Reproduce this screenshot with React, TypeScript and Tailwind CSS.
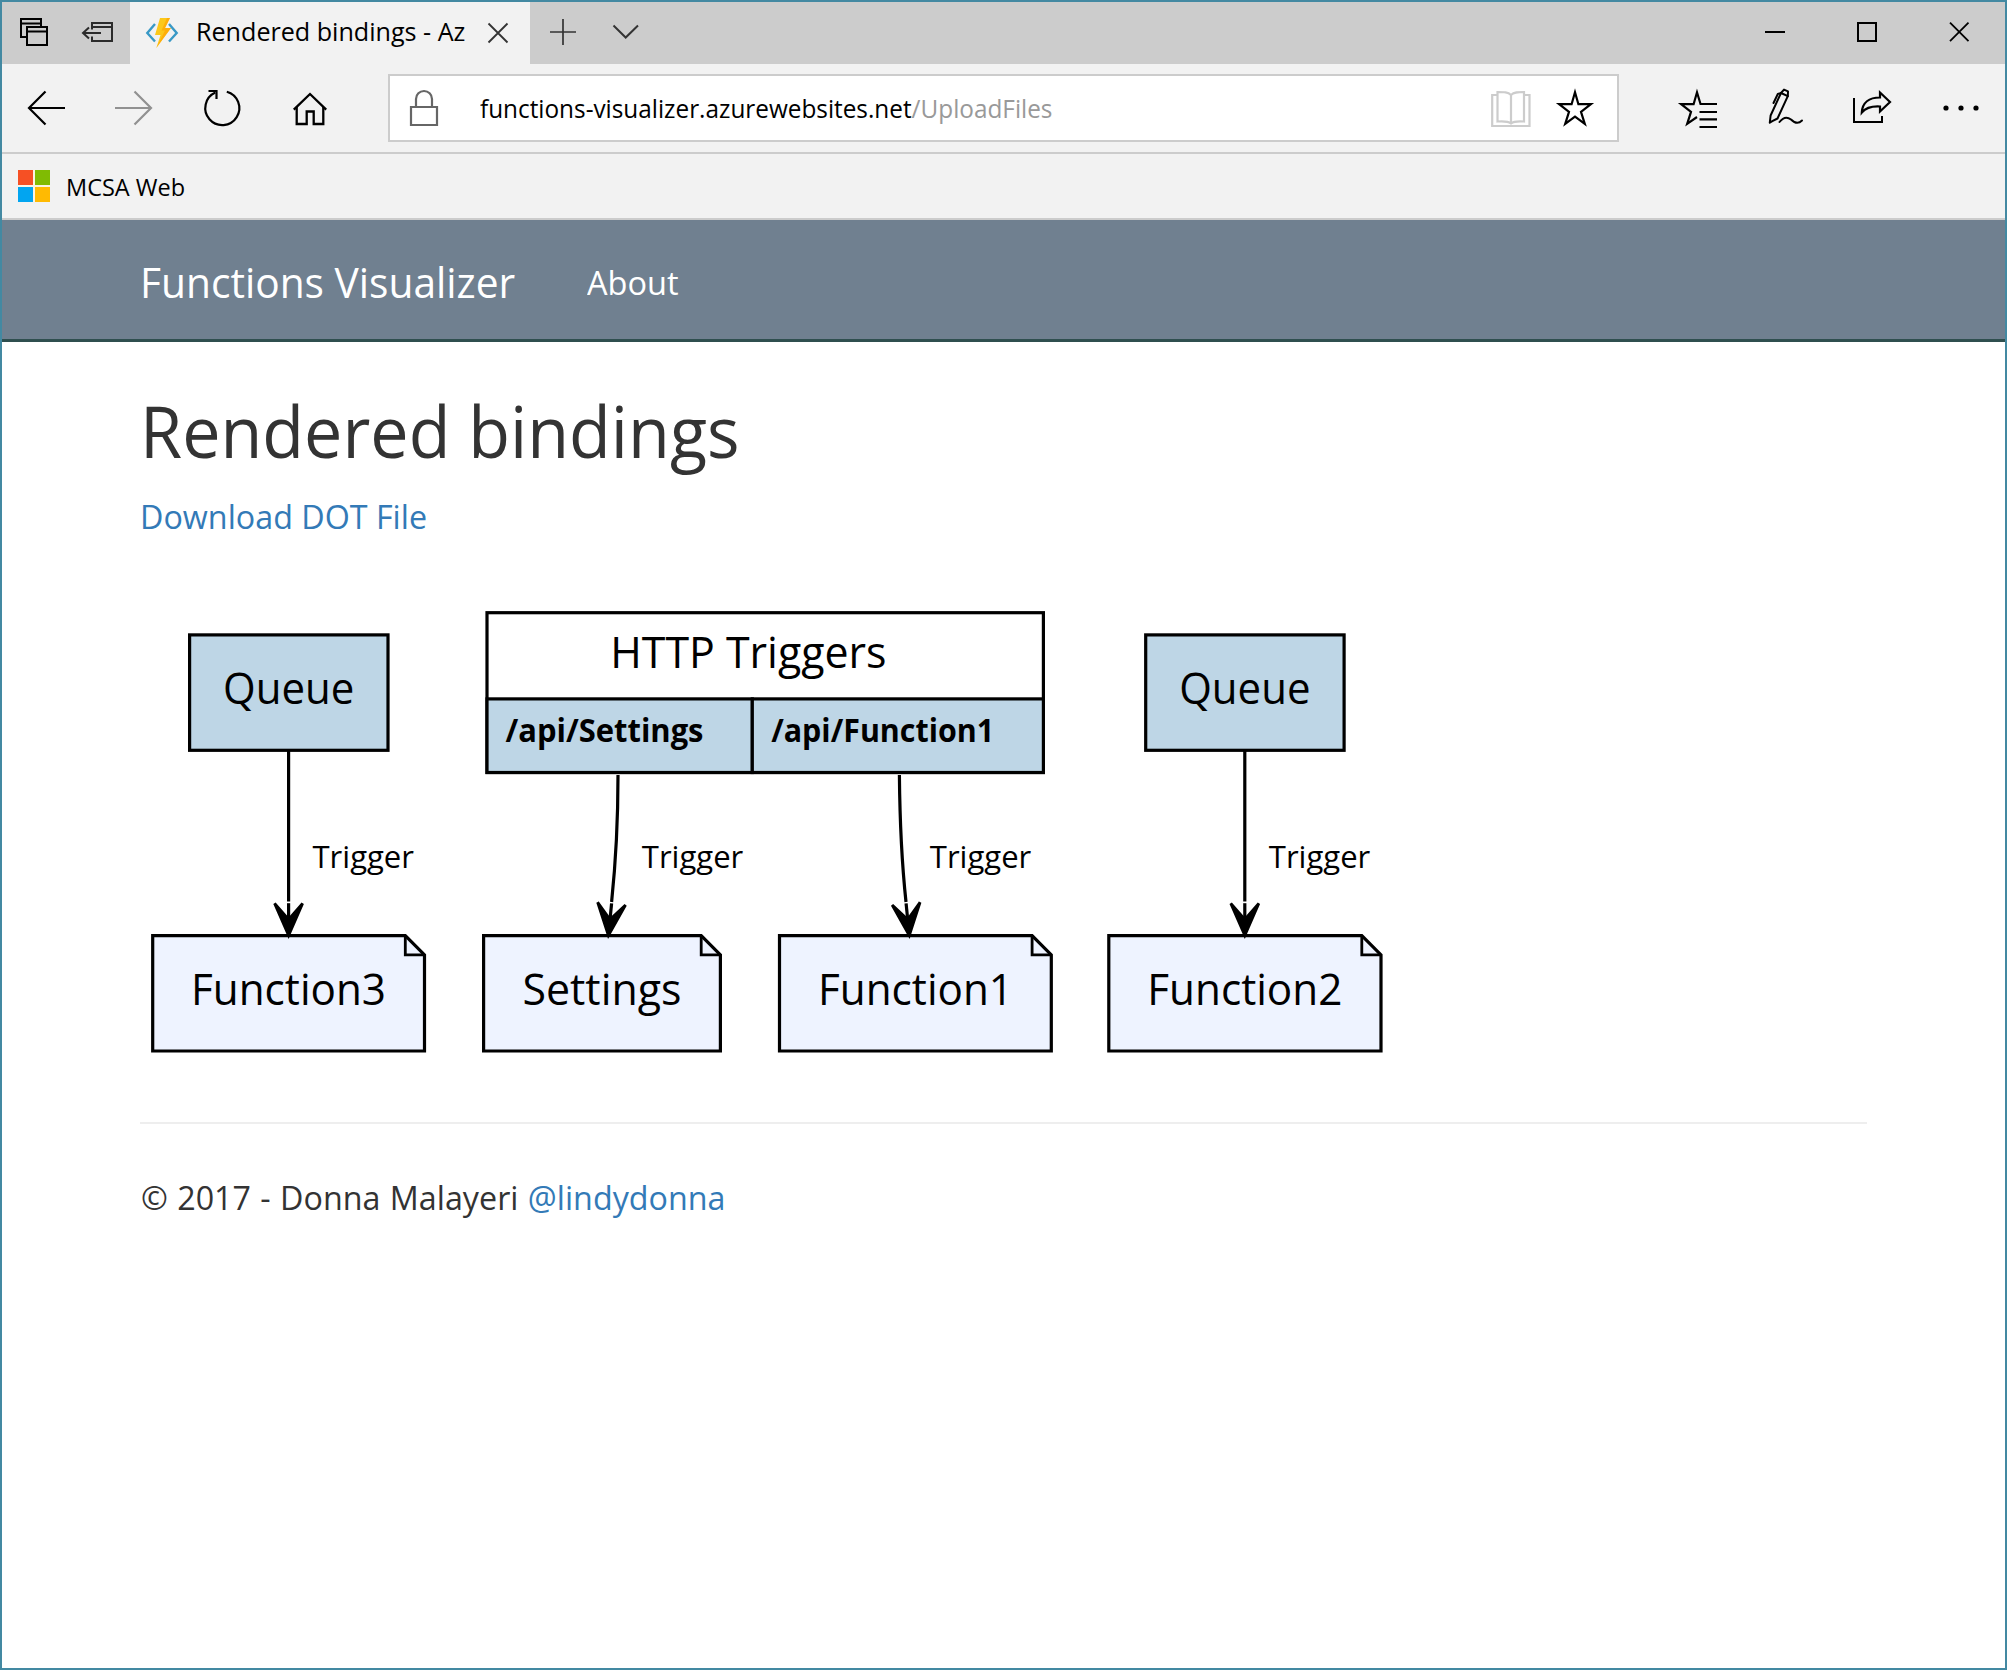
import type { ReactNode } from 'react';

function Glyph({ x, y, w, h, className = '', children }: {
  x: number; y: number; w: number; h: number; className?: string; children: ReactNode;
}) {
  return (
    <svg
      width={w}
      height={h}
      viewBox={`${x} ${y} ${w} ${h}`}
      fill="none"
      stroke="#000"
      strokeWidth={2}
      className={`block shrink-0 ${className}`}
    >
      {children}
    </svg>
  );
}

function TabStrip() {
  return (
    <div className="flex h-[62px] bg-[#cccccc]">
      <Glyph x={2} y={2} w={64} h={62}>
        <path d="M27 37H21V19H41V26M21 23.5H41" />
        <path d="M27 27H47V45H27ZM27 31.5H47" />
      </Glyph>
      <Glyph x={66} y={2} w={64} h={62}>
        <g stroke="#2b2b2b">
          <path d="M92 29.5V23H112V41H92V36.5M92 27H112" />
          <path d="M101 33H83M89 27.5L83 33L89 38.5" />
        </g>
      </Glyph>
      <div className="flex w-[400px] items-center bg-[#f2f2f2]">
        <Glyph x={144} y={16} w={36} h={32} className="ml-3.5">
          <path d="M155 23L147.3 32L155 40.5M169 23L176.7 32L169 40.5" stroke="#3999c6" strokeWidth={2.4} />
          <path d="M160 17H170L165 27H171L156.3 47L160.5 34H155Z" fill="#fcc81a" stroke="none" />
          <path d="M167 17H170L165 27H171L156.3 47L165 29.5H161.5Z" fill="#ff9f00" fillOpacity={0.65} stroke="none" />
        </Glyph>
        <span className="mb-1 ml-4 w-[284px] text-[25.5px] whitespace-nowrap">
          <span className="inline-block origin-left scale-x-[0.985]">Rendered bindings - Az</span>
        </span>
        <Glyph x={486} y={20} w={24} h={24} className="ml-1.5">
          <path d="M488.5 22.5L507.5 41.5M507.5 22.5L488.5 41.5" stroke="#333" strokeWidth={1.8} />
        </Glyph>
      </div>
      <Glyph x={530} y={2} w={64} h={62}>
        <path d="M550 32H576M563 19V45" stroke="#333" strokeWidth={1.7} />
      </Glyph>
      <Glyph x={594} y={2} w={64} h={62}>
        <path d="M613.5 25.5L625.7 37.5L638 25.5" stroke="#333" />
      </Glyph>
      <div className="ml-auto flex">
        <Glyph x={1729} y={2} w={92} h={62}>
          <path d="M1765 32H1785" />
        </Glyph>
        <Glyph x={1821} y={2} w={92} h={62}>
          <path d="M1858 23H1876V41H1858Z" />
        </Glyph>
        <Glyph x={1913} y={2} w={92} h={62}>
          <path d="M1950 22.7L1968.5 41.2M1968.5 22.7L1950 41.2" strokeWidth={1.8} />
        </Glyph>
      </div>
    </div>
  );
}

function Toolbar() {
  return (
    <div className="flex h-[90px] items-center border-b-2 border-[#cccccc] bg-[#f2f2f2]">
      <Glyph x={2} y={64} w={88} h={88}>
        <path d="M65 108H28.5M45.5 91.5L29 108L45.5 124.5" strokeWidth={2.2} />
      </Glyph>
      <Glyph x={90} y={64} w={88} h={88}>
        <path d="M115 108H151.5M134.5 91.5L151 108L134.5 124.5" stroke="#919191" strokeWidth={2.2} />
      </Glyph>
      <Glyph x={178} y={64} w={88} h={88}>
        <path d="M226.8 91.7A17 17 0 1 1 215.3 92.6" strokeWidth={2.2} />
        <path d="M208.5 91H216.5V99" strokeWidth={2.2} />
      </Glyph>
      <Glyph x={266} y={64} w={88} h={88}>
        <path d="M293.8 109.7L310 94L326.2 109.7" strokeWidth={2.3} />
        <path d="M296.7 107V124H306.7V111.5H313.7V124H323.3V107" strokeWidth={2.3} />
      </Glyph>
      <div className="ml-[34px] flex h-[68px] w-[1231px] items-center border-2 border-[#cccccc] bg-white">
        <Glyph x={408} y={88} w={32} h={40} className="ml-[18px]">
          <g stroke="#666">
            <path d="M411 107H437V125H411Z" strokeWidth={2.2} />
            <path d="M416 106V99A8 8 0 0 1 432 99V106" strokeWidth={2.2} />
          </g>
        </Glyph>
        <span className="ml-10 text-[25.5px] whitespace-nowrap">
          <span className="inline-block origin-left scale-x-[0.954]">
            functions-visualizer.azurewebsites.net<span className="text-[#999999]">/UploadFiles</span>
          </span>
        </span>
        <div className="mr-[18px] ml-auto flex">
          <Glyph x={1488} y={86} w={64} h={44}>
            <g stroke="#cccccc" strokeWidth={2.2}>
              <path d="M1497 95H1492.2V126H1529.5V95H1525" />
              <path d="M1511 95C1508 92 1504 92 1497.5 92V121.5C1504 121 1508 121 1511 123.5C1514 121 1518 121 1524 121.5V92C1518 92 1514 92 1511 95V123.5" />
            </g>
          </Glyph>
          <Glyph x={1552} y={86} w={47} h={44}>
            <path d="M1575 92.3L1578.4 104.2H1590.9L1581 111.8L1584.8 123.8L1575 116.7L1565.2 123.8L1569 111.8L1559.1 104.2H1571.6Z" strokeWidth={2.2} />
          </Glyph>
        </div>
      </div>
      <div className="ml-auto flex">
        <Glyph x={1653} y={64} w={88} h={88}>
          <path d="M1717 104H1700.5L1697 92.3L1693.6 104.2H1681.1L1691 111.8L1687.2 123.8L1697 117" strokeWidth={2.2} />
          <path d="M1699.5 112H1717M1699.5 119.3H1717M1699.5 127H1717" strokeWidth={2.2} />
        </Glyph>
        <Glyph x={1741} y={64} w={88} h={88}>
          <g strokeLinejoin="round" strokeLinecap="round">
            <path d="M1769.8 122.7L1770.6 115.5L1781 93L1787.8 96.2L1777.5 118.5L1772.3 121.2Z" />
            <path d="M1781 93L1784 89.6L1788 91.4L1787.8 96.2" />
            <path d="M1781 93L1777.8 94L1773.5 103" />
            <path d="M1779.5 122C1783 117.5 1787 116.5 1791 119.5C1795 123.5 1799 123.5 1802 120.5" />
          </g>
        </Glyph>
        <Glyph x={1829} y={64} w={88} h={88}>
          <path d="M1854 98V122H1882V116" />
          <path d="M1880 92.5L1890 102L1880 111.5V106.5C1871 106 1866 107.5 1861.8 112.5C1862.3 103 1869 97.5 1880 97.5Z" strokeWidth={2.2} />
        </Glyph>
        <Glyph x={1917} y={64} w={88} h={88}>
          <g fill="#000" stroke="none">
            <circle cx="1946" cy="108" r="2.6" />
            <circle cx="1961" cy="108" r="2.6" />
            <circle cx="1976" cy="108" r="2.6" />
          </g>
        </Glyph>
      </div>
    </div>
  );
}

function FavoritesBar() {
  return (
    <div className="flex h-[66px] items-center border-b-2 border-[#cccccc] bg-[#f2f2f2] pl-4">
      <div className="grid size-8 grid-cols-2 gap-0.5 bg-[#faf3e3]">
        <div className="bg-[#f65024]" />
        <div className="bg-[#80bb03]" />
        <div className="bg-[#02a5f0]" />
        <div className="bg-[#ffba02]" />
      </div>
      <span className="mt-[3px] ml-4 text-[23.5px]">MCSA Web</span>
    </div>
  );
}

function Label({ x, y, w, size = 44, bold = false, children }: {
  x: number; y: number; w: number; size?: number; bold?: boolean; children: string;
}) {
  return (
    <text x={x} y={y} textLength={w} lengthAdjust="spacingAndGlyphs" fontSize={size} fontWeight={bold ? 700 : 400}>
      {children}
    </text>
  );
}

function Arrow({ x, angle }: { x: number; angle: number }) {
  return (
    <g transform={`rotate(${angle} ${x} 935.5)`}>
      <polygon
        points={`${x},935.5 ${x - 14},903.5 ${x},919.5 ${x + 14},903.5`}
        fill="#000"
        stroke="#000"
        strokeWidth={2.8}
      />
      <path d={`M${x} 903.2V920`} stroke="#000" strokeWidth={3.2} />
    </g>
  );
}

function Note({ left, right }: { left: number; right: number }) {
  const f = right - 19.2;
  return (
    <g stroke="#000" strokeWidth={3.2} fill="#eef3ff">
      <polygon points={`${left},935.6 ${f},935.6 ${right},954.8 ${right},1051 ${left},1051`} />
      <path d={`M${f} 935.6V954.8H${right}`} fill="none" strokeWidth={2.8} />
    </g>
  );
}

function BindingsGraph() {
  return (
    <svg
      width={1280}
      height={480}
      viewBox="140 590 1280 480"
      className="block"
      fontFamily="'Open Sans', sans-serif"
      fill="#000"
    >
      <g stroke="#000" strokeWidth={3.2} fill="#bed6e6">
        <rect x="189.6" y="634.9" width="198.4" height="115.4" />
        <rect x="1145.7" y="634.9" width="198.4" height="115.4" />
        <rect x="487" y="612.7" width="556.4" height="159.8" fill="#fff" />
        <rect x="487" y="698.9" width="265.3" height="73.6" />
        <rect x="752.3" y="698.9" width="291.1" height="73.6" />
      </g>
      <Note left={152.7} right={424.5} />
      <Note left={483.6} right={720.4} />
      <Note left={779.5} right={1051.3} />
      <Note left={1108.8} right={1381} />
      <g stroke="#000" strokeWidth={3.2} fill="none">
        <path d="M288.6 751V901.5M1244.8 751V901.5" />
        <path d="M618 775C618 818 616 860 611.6 902" />
        <path d="M899.4 775C899.8 818 901.5 860 906 902" />
      </g>
      <Arrow x={288.6} angle={0} />
      <Arrow x={608.4} angle={5.7} />
      <Arrow x={909.3} angle={-5.7} />
      <Arrow x={1244.8} angle={0} />
      <Label x={223} y={704} w={131.3}>Queue</Label>
      <Label x={1179.2} y={704} w={131.3}>Queue</Label>
      <Label x={610.2} y={668.3} w={276.3}>HTTP Triggers</Label>
      <Label x={505.5} y={742} w={198} size={31.4} bold>/api/Settings</Label>
      <Label x={771.2} y={742} w={223} size={31.4} bold>/api/Function1</Label>
      <Label x={312.5} y={868.3} w={101.5} size={31.4}>Trigger</Label>
      <Label x={641.8} y={868.3} w={101.5} size={31.4}>Trigger</Label>
      <Label x={929.8} y={868.3} w={101.5} size={31.4}>Trigger</Label>
      <Label x={1268.8} y={868.3} w={101.5} size={31.4}>Trigger</Label>
      <Label x={191} y={1005} w={195}>Function3</Label>
      <Label x={522.5} y={1005} w={159}>Settings</Label>
      <Label x={818} y={1005} w={195}>Function1</Label>
      <Label x={1147.3} y={1005} w={195}>Function2</Label>
    </svg>
  );
}

export default function App() {
  return (
    <div className="flex h-[1670px] w-[2007px] flex-col overflow-hidden border-2 border-[#4389a2] bg-white font-['Open_Sans',sans-serif] text-black">
      <TabStrip />
      <Toolbar />
      <FavoritesBar />
      <nav className="flex h-[122px] items-center border-b-[3px] border-[#2f4f4f] bg-[#708090] px-[138px] pt-1 text-white">
        <a className="w-[447px] text-[42.3px] whitespace-nowrap">
          <span className="inline-block origin-left scale-x-[0.962]">Functions Visualizer</span>
        </a>
        <a className="mt-0.5 origin-left scale-x-[0.985] text-[33px]">About</a>
      </nav>
      <main className="px-[138px] pt-[49px] text-[33px] text-[#333333]">
        <h1 className="origin-left scale-x-[0.967] text-[70.6px] leading-[80px]">Rendered bindings</h1>
        <p className="mt-[22px] leading-[48px]">
          <a className="inline-block origin-left scale-x-[0.978] text-[#337ab7]">Download DOT File</a>
        </p>
        <div className="mt-[49px]">
          <BindingsGraph />
        </div>
        <hr className="mt-[52px] border-t-2 border-[#eeeeee]" />
        <p className="mt-[50px] leading-[48px]">
          <span className="inline-block origin-left scale-x-[0.978] pl-px [word-spacing:1px]">
            © 2017 - Donna Malayeri <a className="text-[#337ab7]">@lindydonna</a>
          </span>
        </p>
      </main>
    </div>
  );
}
